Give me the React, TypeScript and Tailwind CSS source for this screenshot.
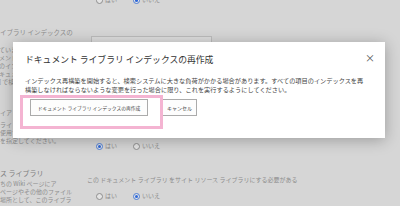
import React from "react";

const jp = { fontFamily: '"Noto Sans CJK JP", "Noto Sans", sans-serif' };

function Radio({ checked, label }: { checked?: boolean; label: string }) {
  return (
    <span className="inline-flex items-center gap-[2px]">
      <span
        className={
          "flex h-[7px] w-[7px] items-center justify-center rounded-full border bg-[#e4e4e4] " +
          (checked ? "border-[#4f7fd6]" : "border-[#8e8e8e]")
        }
      >
        {checked && <span className="h-[3px] w-[3px] rounded-full bg-[#2f68d8]" />}
      </span>
      <span>{label}</span>
    </span>
  );
}

function RadioPair({ yes }: { yes: boolean }) {
  return (
    <div className="flex items-center gap-[16px]">
      <Radio checked={yes} label="はい" />
      <Radio checked={!yes} label="いいえ" />
    </div>
  );
}

export default function App() {
  return (
    <div
      className="relative h-[206px] w-[400px] overflow-hidden bg-[#d6d6d6] text-[6px] leading-[8px] text-[#8c8c8c]"
      style={jp}
    >
      {/* dimmed settings page */}
      <div className="flex h-[26px] items-start pl-[96px] -mt-[4px]">
        <RadioPair yes={false} />
      </div>

      <div className="flex h-[82px] items-start">
        <div className="w-[87px] pt-[6px]">
          <div className="text-[6.5px] leading-[8px]">イブラリ インデックスの</div>
          <div className="mt-[10px] -ml-[1px]">
            <div>ています</div>
            <div>メント</div>
            <div>のイン</div>
            <div>キュメ</div>
            <div>] で検</div>
          </div>
        </div>
        <div className="pt-[14px] pl-[4px]">
          <div className="h-[12px] w-[121px] border border-[#bdbdbd] bg-[#dedede]" />
        </div>
      </div>

      <div className="flex h-[64px] items-start">
        <div className="w-[87px] pt-[5px]">
          <div>イア</div>
          <div className="mt-[4px]">ライ</div>
          <div>使用で</div>
          <div>を指定してください。</div>
        </div>
        <div className="pt-[38px] pl-[9px]">
          <RadioPair yes={true} />
        </div>
      </div>

      <div className="flex items-start">
        <div className="w-[87px]">
          <div className="text-[7px] leading-[10px] text-[#7c7c7c]">ス ライブラリ</div>
          <div className="mt-[2px]">ちの Wiki ページにア</div>
          <div>ページやその他のファイル</div>
          <div>場所として、このライブラ</div>
        </div>
        <div className="pt-[8px]">
          <div>この ドキュメント ライブラリ をサイト リソース ライブラリにする必要がある</div>
          <div className="mt-[8px] pl-[9px]">
            <RadioPair yes={false} />
          </div>
        </div>
      </div>

      {/* dialog */}
      <div className="absolute left-[13px] top-[42px] flex h-[96px] w-[372px] flex-col bg-white px-[12px] shadow-[0_2px_14px_rgba(0,0,0,0.28)]">
        <div className="flex items-start justify-between pt-[12px]">
          <div className="text-[8.8px] leading-[11px] text-[#333]">
            ドキュメント ライブラリ インデックスの再作成
          </div>
          <div className="-mr-[2px] -mt-[1px] text-[10px] leading-[10px] text-[#555]">×</div>
        </div>
        <div className="mt-[11px] text-[6.2px] leading-[9px] text-[#444]">
          <div>インデックス再構築を開始すると、検索システムに大きな負荷がかかる場合があります。すべての項目のインデックスを再</div>
          <div>構築しなければならないような変更を行った場合に限り、これを実行するようにしてください。</div>
        </div>
        <div className="mt-[5px] flex gap-[14px] pl-[5px]">
          <button className="h-[17px] w-[118px] border border-[#ababab] bg-[#fdfdfd] text-[4.8px] text-[#444]">
            ドキュメント ライブラリ インデックスの再作成
          </button>
          <button className="h-[17px] w-[35px] border border-[#ababab] bg-[#fdfdfd] text-[5px] text-[#444]">
            キャンセル
          </button>
        </div>
      </div>

      {/* highlight */}
      <div className="absolute left-[20px] top-[95px] h-[34px] w-[143px] border-[3px] border-[#f4b4d2]" />
    </div>
  );
}
